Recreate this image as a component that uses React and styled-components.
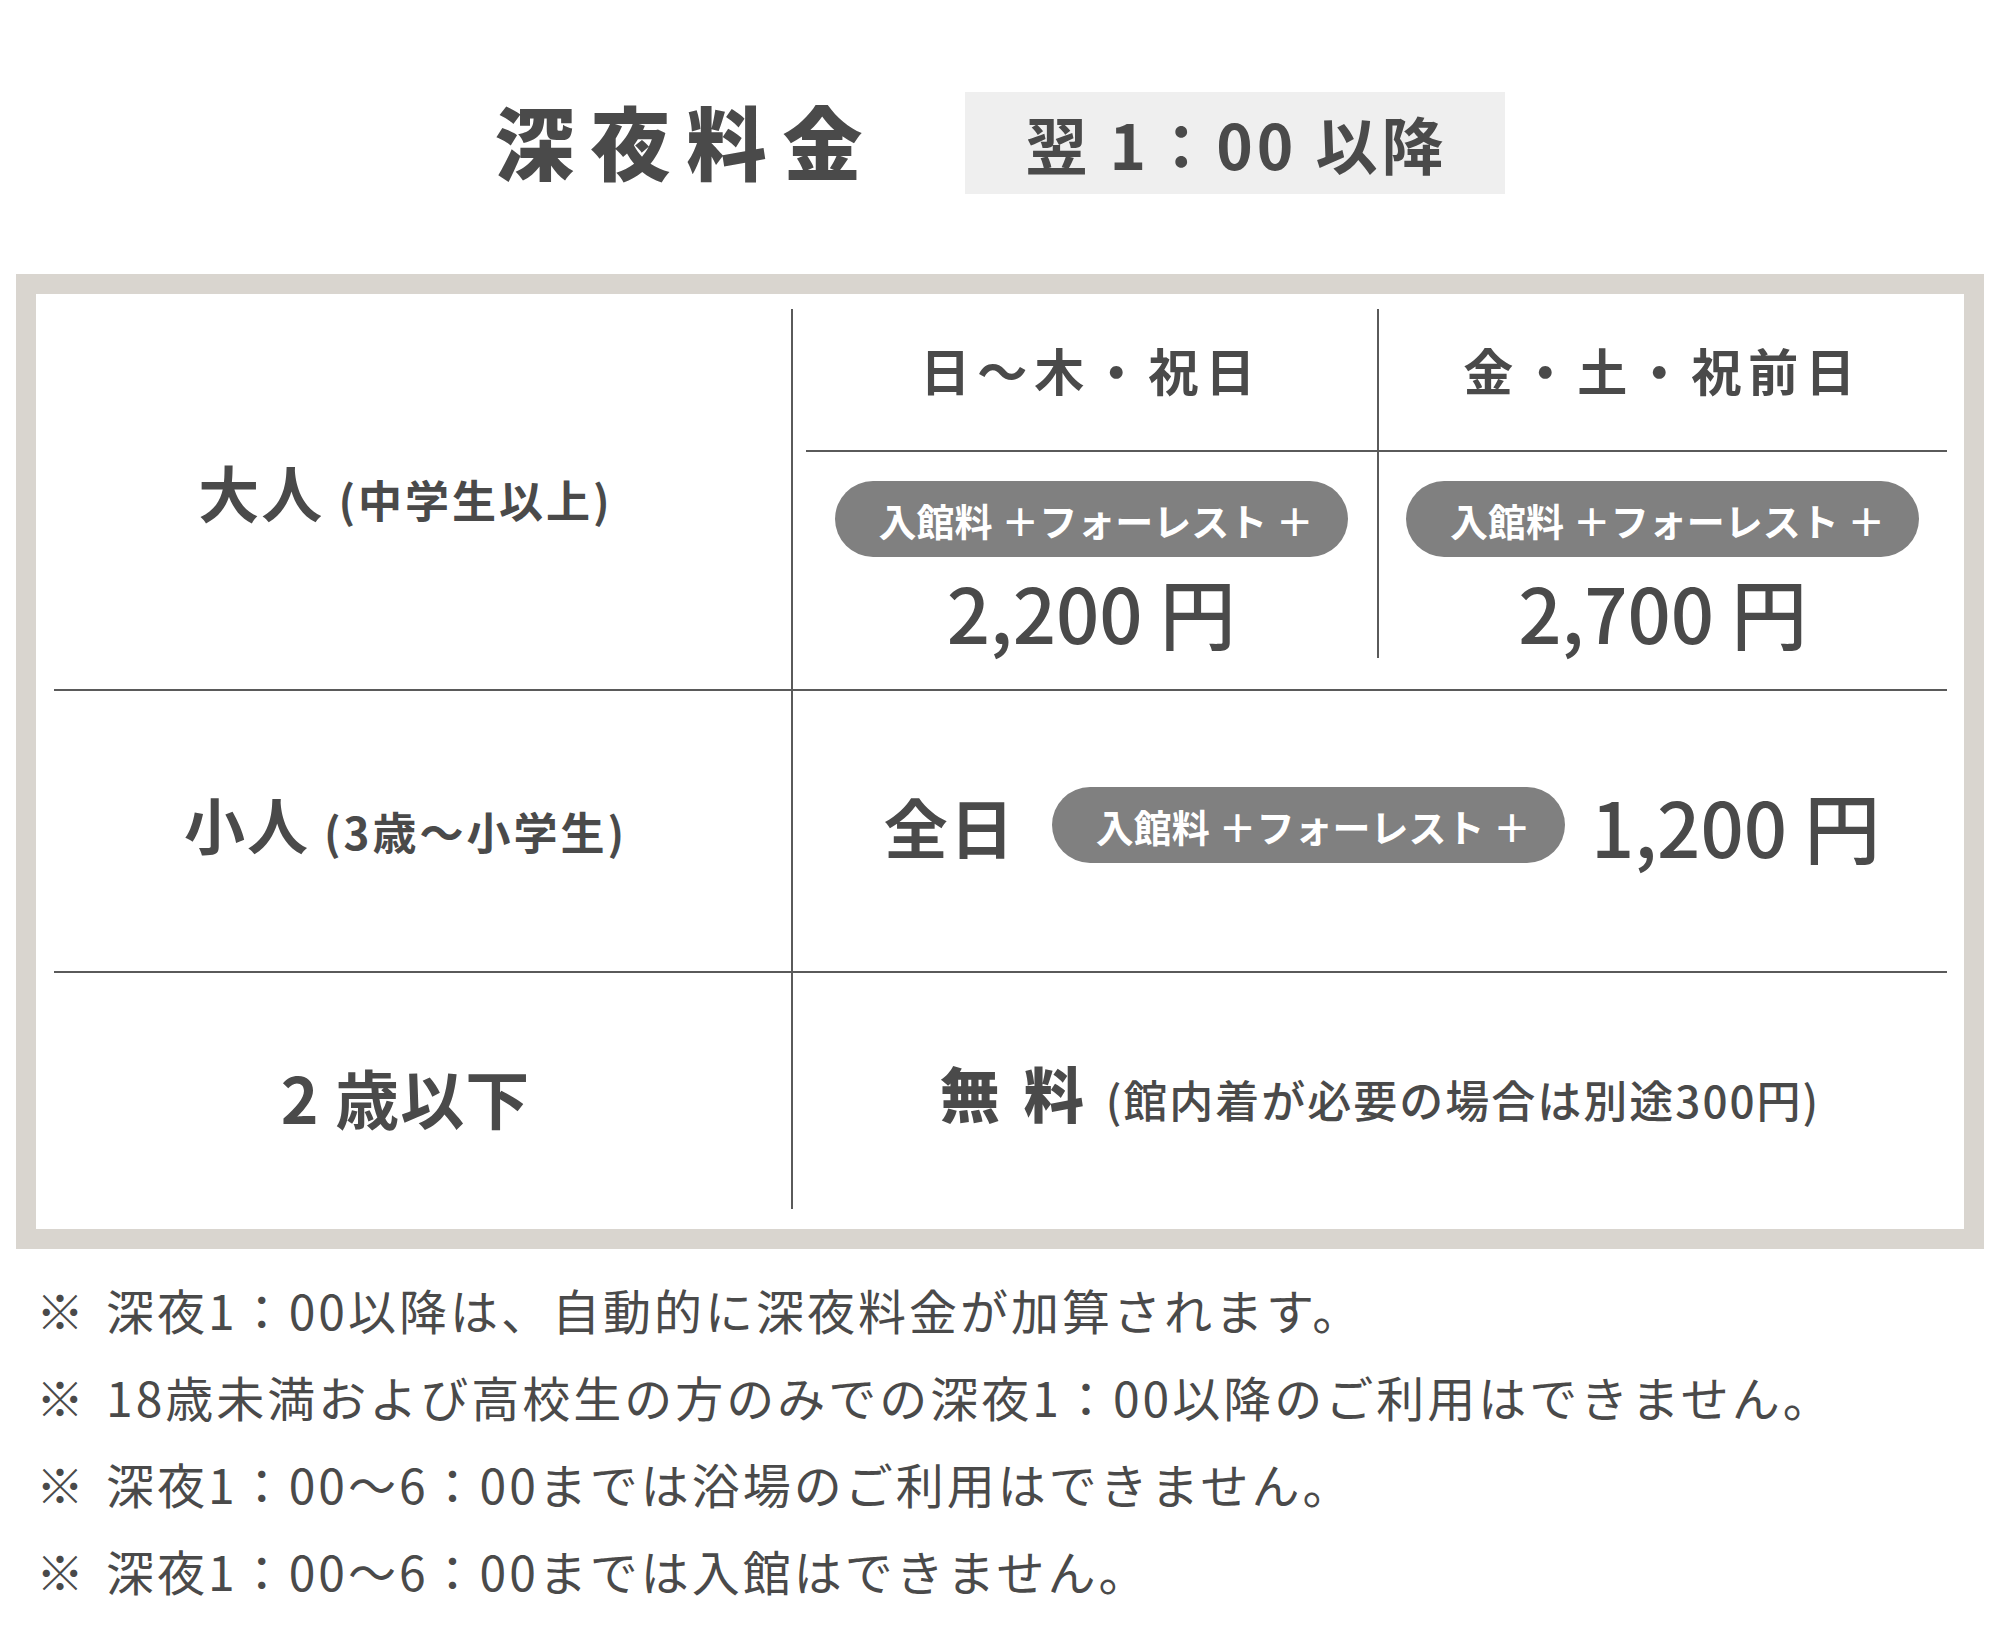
import styled, { createGlobalStyle } from 'styled-components';

const GlobalStyle = createGlobalStyle`
  html, body {
    margin: 0;
    padding: 0;
    background: #ffffff;
  }
  body {
    font-family: "Noto Sans CJK JP", "Noto Sans", sans-serif;
    color: #4a4a4a;
  }
`;

const LINE = '2px solid #5a5a5a';

const Page = styled.div`
  width: 2000px;
  padding: 92px 16px 0;
  box-sizing: border-box;
`;

const Header = styled.header`
  display: flex;
  justify-content: center;
  align-items: center;
  gap: 86px;
`;

const Title = styled.h1`
  margin: 0 0 8px;
  font-size: 80px;
  font-weight: 900;
  letter-spacing: 16px;
  line-height: 1;
  color: #4a4a4a;
`;

const TimeBadge = styled.div`
  background: #efefef;
  height: 102px;
  padding: 0 58px 0 61px;
  display: flex;
  align-items: center;
  font-size: 62px;
  font-weight: 700;
  letter-spacing: 4px;
  color: #4a4a4a;
`;

const Frame = styled.section`
  margin-top: 80px;
  border: 20px solid #d9d5cf;
  background: #fff;
  padding: 15px 17px 20px 18px;
`;

const Table = styled.div`
  display: grid;
  grid-template-columns: 737px 1fr;
  grid-template-rows: 380px 282px 238px;
`;

const Cell = styled.div`
  display: flex;
  align-items: center;
  justify-content: center;
  border-top: ${(p) => (p.$divider ? LINE : 'none')};
  border-left: ${(p) => (p.$side ? LINE : 'none')};
  box-sizing: border-box;
  min-width: 0;
`;

const LabelCell = styled(Cell)`
  padding: ${(p) => (p.$low ? '10px 34px 0 0' : '0 34px 14px 0')};
`;

const Label = styled.div`
  display: flex;
  align-items: baseline;
  gap: 14px;
  font-size: ${(p) => (p.$large ? 64 : 61)}px;
  font-weight: 700;
  line-height: 1.2;
  letter-spacing: ${(p) => (p.$large ? 1 : 2)}px;
`;

const Sub = styled.span`
  font-size: 44px;
  font-weight: 700;
  letter-spacing: 3px;
`;

const WeekCell = styled(Cell)`
  align-items: stretch;
  justify-content: stretch;
  padding-left: 13px;
`;

const WeekGrid = styled.div`
  flex: 1;
  display: grid;
  grid-template-columns: 1fr 1fr;
  grid-template-rows: 143px 1fr;
  padding-bottom: 31px;
`;

const DayHead = styled.div`
  display: flex;
  align-items: center;
  justify-content: center;
  padding-bottom: 22px;
  border-bottom: ${LINE};
  border-left: ${(p) => (p.$side ? LINE : 'none')};
  font-size: 50px;
  font-weight: 700;
  letter-spacing: 7px;
`;

const DayPrice = styled.div`
  display: flex;
  flex-direction: column;
  align-items: center;
  padding-top: 29px;
  gap: 16px;
  border-left: ${(p) => (p.$side ? LINE : 'none')};
`;

const Pill = styled.span`
  display: inline-flex;
  align-items: center;
  height: 76px;
  padding: 0 34px 0 44px;
  border-radius: 38px;
  background: #808080;
  color: #ffffff;
  font-size: 38px;
  font-weight: 700;
  white-space: pre;
  margin: ${(p) => p.$margin || '0'};
`;

const Price = styled.span`
  font-size: 76px;
  font-weight: 500;
  line-height: 1;
  white-space: nowrap;
`;

const Inline = styled.div`
  display: flex;
  align-items: center;
  padding: 0 0 12px 24px;
`;

const AllDay = styled.span`
  font-size: 64px;
  font-weight: 700;
  letter-spacing: 2px;
`;

const Free = styled.div`
  display: flex;
  align-items: baseline;
  gap: 22px;
  padding-left: 20px;
`;

const FreeWord = styled.span`
  font-size: 60px;
  font-weight: 900;
  letter-spacing: 24px;
  margin-right: -24px;
`;

const FreeNote = styled.span`
  font-size: 44px;
  font-weight: 500;
  letter-spacing: 2px;
`;

const Notes = styled.ul`
  list-style: none;
  margin: 17px 0 0;
  padding: 0 0 0 20px;
`;

const Note = styled.li`
  display: flex;
  gap: 22px;
  font-size: 48px;
  line-height: 87px;
  letter-spacing: 3px;
  color: #4a4a4a;
`;

const Mark = styled.span`
  letter-spacing: 0;
`;

const PillText = ({ margin }) => <Pill $margin={margin}>{'入館料 ＋フォーレスト ＋'}</Pill>;

const notes = [
  '深夜1：00以降は、自動的に深夜料金が加算されます。',
  '18歳未満および高校生の方のみでの深夜1：00以降のご利用はできません。',
  '深夜1：00〜6：00までは浴場のご利用はできません。',
  '深夜1：00〜6：00までは入館はできません。',
];

export default function App() {
  return (
    <Page>
      <GlobalStyle />
      <Header>
        <Title>深夜料金</Title>
        <TimeBadge>翌 1：00 以降</TimeBadge>
      </Header>

      <Frame>
        <Table>
          <LabelCell>
            <Label>
              大人<Sub>(中学生以上)</Sub>
            </Label>
          </LabelCell>
          <WeekCell $side>
            <WeekGrid>
              <DayHead>日〜木・祝日</DayHead>
              <DayHead $side>金・土・祝前日</DayHead>
              <DayPrice>
                <PillText />
                <Price>2,200 円</Price>
              </DayPrice>
              <DayPrice $side>
                <PillText />
                <Price>2,700 円</Price>
              </DayPrice>
            </WeekGrid>
          </WeekCell>

          <LabelCell $divider>
            <Label>
              小人<Sub>(3歳〜小学生)</Sub>
            </Label>
          </LabelCell>
          <Cell $divider $side>
            <Inline>
              <AllDay>全日</AllDay>
              <PillText margin="0 26px 0 36px" />
              <Price>1,200 円</Price>
            </Inline>
          </Cell>

          <LabelCell $divider $low>
            <Label $large>2 歳以下</Label>
          </LabelCell>
          <Cell $divider $side>
            <Free>
              <FreeWord>無料</FreeWord>
              <FreeNote>(館内着が必要の場合は別途300円)</FreeNote>
            </Free>
          </Cell>
        </Table>
      </Frame>

      <Notes>
        {notes.map((text) => (
          <Note key={text}>
            <Mark>※</Mark>
            <span>{text}</span>
          </Note>
        ))}
      </Notes>
    </Page>
  );
}
